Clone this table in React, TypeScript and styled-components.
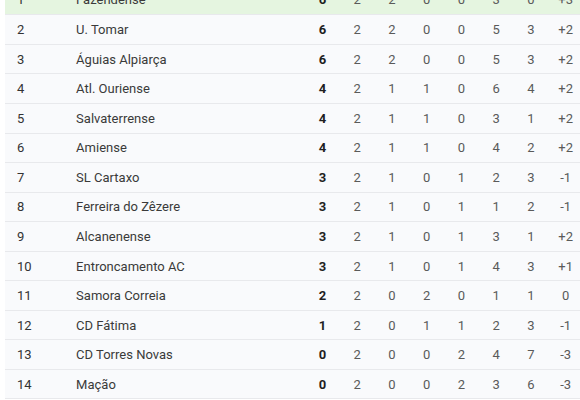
import React from "react";
import styled, { createGlobalStyle } from "styled-components";

type Team = {
  pos: number;
  name: string;
  pts: number;
  j: number;
  v: number;
  e: number;
  d: number;
  gm: number;
  gs: number;
  dif: string;
};

const teams: Team[] = [
  { pos: 1, name: "Fazendense", pts: 6, j: 2, v: 2, e: 0, d: 0, gm: 3, gs: 0, dif: "+3" },
  { pos: 2, name: "U. Tomar", pts: 6, j: 2, v: 2, e: 0, d: 0, gm: 5, gs: 3, dif: "+2" },
  { pos: 3, name: "Águias Alpiarça", pts: 6, j: 2, v: 2, e: 0, d: 0, gm: 5, gs: 3, dif: "+2" },
  { pos: 4, name: "Atl. Ouriense", pts: 4, j: 2, v: 1, e: 1, d: 0, gm: 6, gs: 4, dif: "+2" },
  { pos: 5, name: "Salvaterrense", pts: 4, j: 2, v: 1, e: 1, d: 0, gm: 3, gs: 1, dif: "+2" },
  { pos: 6, name: "Amiense", pts: 4, j: 2, v: 1, e: 1, d: 0, gm: 4, gs: 2, dif: "+2" },
  { pos: 7, name: "SL Cartaxo", pts: 3, j: 2, v: 1, e: 0, d: 1, gm: 2, gs: 3, dif: "-1" },
  { pos: 8, name: "Ferreira do Zêzere", pts: 3, j: 2, v: 1, e: 0, d: 1, gm: 1, gs: 2, dif: "-1" },
  { pos: 9, name: "Alcanenense", pts: 3, j: 2, v: 1, e: 0, d: 1, gm: 3, gs: 1, dif: "+2" },
  { pos: 10, name: "Entroncamento AC", pts: 3, j: 2, v: 1, e: 0, d: 1, gm: 4, gs: 3, dif: "+1" },
  { pos: 11, name: "Samora Correia", pts: 2, j: 2, v: 0, e: 2, d: 0, gm: 1, gs: 1, dif: "0" },
  { pos: 12, name: "CD Fátima", pts: 1, j: 2, v: 0, e: 1, d: 1, gm: 2, gs: 3, dif: "-1" },
  { pos: 13, name: "CD Torres Novas", pts: 0, j: 2, v: 0, e: 0, d: 2, gm: 4, gs: 7, dif: "-3" },
  { pos: 14, name: "Mação", pts: 0, j: 2, v: 0, e: 0, d: 2, gm: 3, gs: 6, dif: "-3" },
];

export default function App() {
  return (
    <>
      <GlobalStyle />
      <Page>
        <Table>
          <colgroup>
            <col style={{ width: 71 }} />
            <col style={{ width: 228.6 }} />
            {Array.from({ length: 8 }).map((_, i) => (
              <col key={i} style={{ width: 34.7 }} />
            ))}
          </colgroup>
          <tbody>
            {teams.map((t) => (
              <Row key={t.pos} $promo={t.pos === 1}>
                <PosCell>{t.pos}</PosCell>
                <NameCell>{t.name}</NameCell>
                <PtsCell>{t.pts}</PtsCell>
                <StatCell>{t.j}</StatCell>
                <StatCell>{t.v}</StatCell>
                <StatCell>{t.e}</StatCell>
                <StatCell>{t.d}</StatCell>
                <StatCell>{t.gm}</StatCell>
                <StatCell>{t.gs}</StatCell>
                <StatCell>{t.dif}</StatCell>
              </Row>
            ))}
          </tbody>
        </Table>
      </Page>
    </>
  );
}

const GlobalStyle = createGlobalStyle`
  html, body {
    margin: 0;
    overflow: hidden;
    background: #ffffff;
  }
  body {
    font-family: Roboto, "Liberation Sans", sans-serif;
  }
`;

const Page = styled.div`
  padding-left: 5px;
  margin-top: -14.7px;
`;

const Table = styled.table`
  width: 578px;
  table-layout: fixed;
  border-collapse: collapse;
  font-size: 13px;
`;

const Row = styled.tr<{ $promo: boolean }>`
  height: 29.55px;
  background: ${(p) => (p.$promo ? "#e5f5e0" : "#f9fafc")};
  border-bottom: 1px solid #e8e9ec;
`;

const PosCell = styled.td`
  padding: 0 0 0 12px;
  color: #333333;
  vertical-align: middle;
`;

const NameCell = styled.td`
  padding: 0;
  color: #3a3a3a;
  white-space: nowrap;
  vertical-align: middle;
`;

const PtsCell = styled.td`
  padding: 0;
  text-align: center;
  font-weight: 700;
  color: #1f1f1f;
  vertical-align: middle;
`;

const StatCell = styled.td`
  padding: 0;
  text-align: center;
  color: #5a5a5a;
  vertical-align: middle;
`;
